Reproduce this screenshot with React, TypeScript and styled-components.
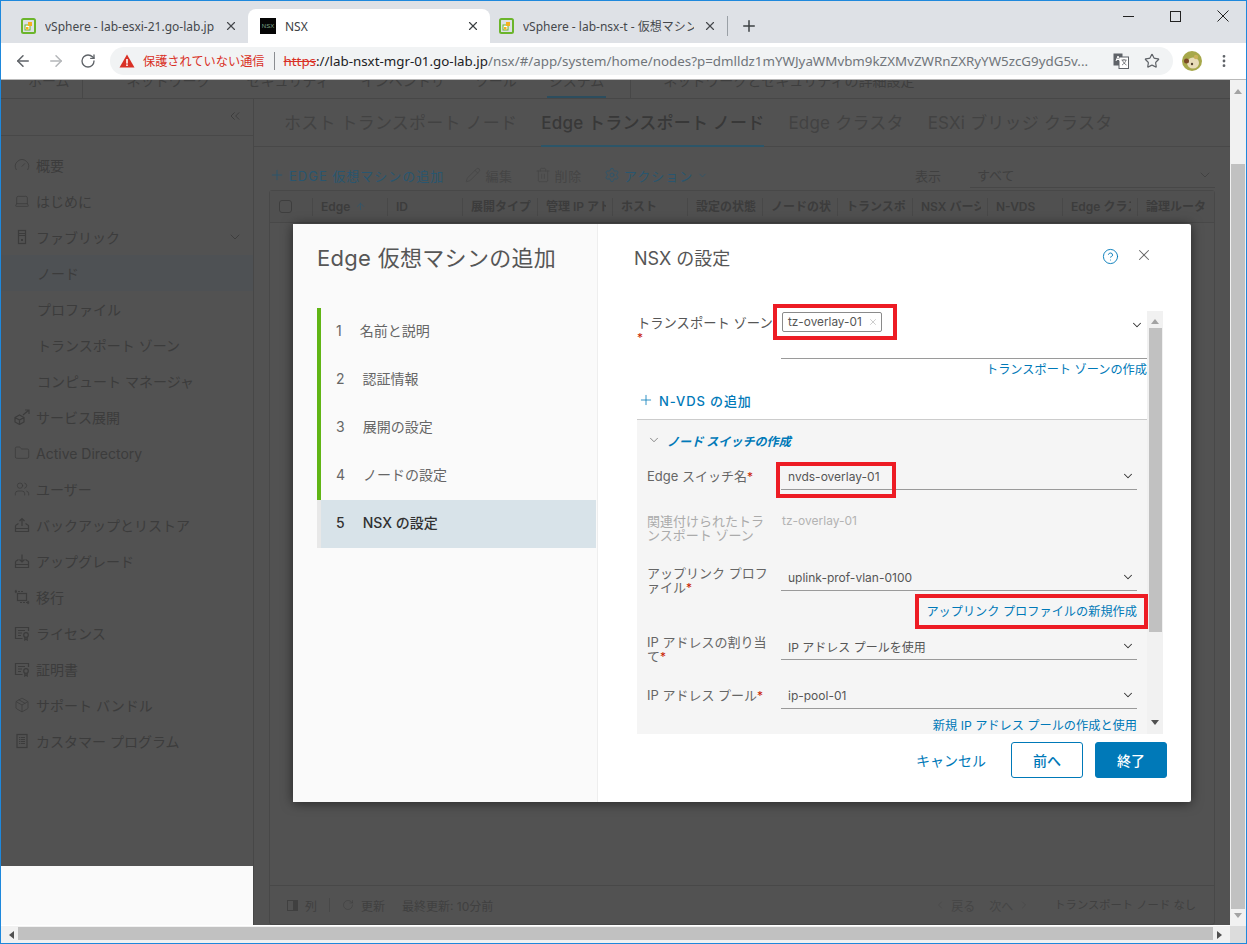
import styled, { createGlobalStyle } from 'styled-components';
import { ReactNode } from 'react';
import {
  ArrowLeft,
  ArrowRight,
  ArrowUp,
  ChevronDown,
  ChevronLeft,
  ChevronRight,
  ChevronsLeft,
  CircleHelp,
  Folder,
  Gauge,
  Laptop,
  MoreVertical,
  Package,
  Pencil,
  Plus,
  RotateCw,
  Settings,
  Star,
  Trash2,
  Users,
  X,
} from 'lucide-react';

const UI = `Inter, "Noto Sans CJK JP", sans-serif`;
const CHROME = `"Noto Sans", "Noto Sans CJK JP", sans-serif`;

const Global = createGlobalStyle`
  html, body { margin: 0; padding: 0; overflow: hidden; background: #fff; }
  * { box-sizing: border-box; }
`;

const Page = styled.div`
  position: relative;
  width: 1247px;
  height: 944px;
  overflow: hidden;
  display: flex;
  flex-direction: column;
  border: 1px solid #1e88dc;
  font-family: ${UI};
`;

/* browser chrome */
const TabStrip = styled.div`
  height: 42px;
  background: #dee1e6;
  display: flex;
  align-items: flex-end;
  padding-left: 7px;
  flex-shrink: 0;
`;

const Tab = styled.div<{ $active?: boolean; $width: number; $pad: number }>`
  width: ${({ $width }) => $width}px;
  height: 34px;
  display: flex;
  align-items: center;
  gap: 9px;
  padding: 0 10px 0 ${({ $pad }) => $pad}px;
  background: ${({ $active }) => ($active ? '#fff' : 'transparent')};
  border-radius: 8px 8px 0 0;
  font: 12px ${CHROME};
  color: ${({ $active }) => ($active ? '#3c4043' : '#45484c')};
`;

const TabTitle = styled.span`
  flex: 1;
  min-width: 0;
  white-space: nowrap;
  overflow: hidden;
`;

const NsxFavicon = styled.span`
  width: 16px;
  height: 16px;
  background: #050505;
  color: #7fa98f;
  font: 6px/16px "Liberation Sans", sans-serif;
  text-align: center;
  flex-shrink: 0;
`;

const TabSeparator = styled.div`
  width: 1px;
  height: 20px;
  background: #9aa0a6;
  margin: 0 12px 7px 0;
`;

const NewTab = styled.div`
  height: 34px;
  display: flex;
  align-items: center;
  color: #3c4043;
`;

const WindowButtons = styled.div`
  margin-left: auto;
  align-self: flex-start;
  display: flex;
  height: 30px;
  align-items: center;
  color: #222;
`;

const WindowButton = styled.div`
  width: 47px;
  display: flex;
  justify-content: center;
  align-items: center;
`;

const ToolBar = styled.div`
  height: 37px;
  background: #fff;
  border-bottom: 1px solid #b9b9b9;
  display: flex;
  align-items: center;
  padding-left: 13px;
  flex-shrink: 0;
`;

const NavButton = styled.div<{ $muted?: boolean }>`
  width: 33px;
  display: flex;
  align-items: center;
  color: ${({ $muted }) => ($muted ? '#b4b6b9' : '#5f6368')};
`;

const UrlPill = styled.div`
  width: 1063px;
  height: 28px;
  margin-left: -3px;
  border-radius: 14px;
  background: #f1f3f4;
  display: flex;
  align-items: center;
  padding: 0 13px 0 9px;
  font: 13.35px ${CHROME};
  white-space: nowrap;
`;

const NotSecure = styled.span`
  color: #d93025;
  margin-left: 8px;
  font-size: 12.2px;
`;

const UrlDivider = styled.span`
  width: 1px;
  height: 18px;
  background: #8a8d91;
  margin: 0 9px;
`;

const Https = styled.span`
  color: #d93025;
  text-decoration: line-through;
`;

const UrlHost = styled.span`
  color: #202124;
`;

const UrlRest = styled.span`
  flex: 1;
  min-width: 0;
  overflow: hidden;
  color: #70757a;
`;

const PillIcons = styled.div`
  display: flex;
  align-items: center;
  gap: 15px;
  color: #5f6368;
  margin-left: 10px;
`;

const ToolEnd = styled.div`
  display: flex;
  align-items: center;
  margin-left: 9px;
  gap: 14px;
  color: #5f6368;
`;

/* page behind the dialog */
const Viewport = styled.div`
  flex: 1;
  min-height: 0;
  display: flex;
`;

const AppPane = styled.div`
  width: 1229px;
  display: flex;
  flex-direction: column;
  background: #525252;
  color: #3e3e3e;
  border-bottom: 1px solid #fff;
`;

const HeaderNav = styled.div`
  height: 19px;
  flex-shrink: 0;
  overflow: hidden;
  display: flex;
  padding-left: 27px;
  border-bottom: 1px solid #474747;
  font-size: 14px;
`;

const HeaderItem = styled.div<{ $active?: boolean; $gap: number; $side?: number }>`
  height: 26px;
  margin-top: -8px;
  margin-right: ${({ $gap }) => $gap}px;
  padding: 0 ${({ $side }) => $side ?? 0}px;
  line-height: 18px;
  white-space: nowrap;
  border-bottom: 2px solid ${({ $active }) => ($active ? '#2c4d5e' : 'transparent')};
`;

const Divider = styled.div<{ $gap: number }>`
  width: 1px;
  height: 18px;
  background: #474747;
  margin-right: ${({ $gap }) => $gap}px;
`;

const Body = styled.div`
  flex: 1;
  min-height: 0;
  display: flex;
`;

const SideColumn = styled.div`
  width: 253px;
  display: flex;
  flex-direction: column;
  border-right: 1px solid #474747;
  flex-shrink: 0;
`;

const SideNav = styled.div`
  height: 767px;
  background: #525252;
`;

const SideBlank = styled.div`
  flex: 1;
  background: #fafafa;
`;

const Collapse = styled.div`
  height: 37px;
  border-bottom: 1px solid #484848;
  display: flex;
  justify-content: flex-end;
  align-items: center;
  padding: 0 10px 2px 0;
  color: #383838;
  margin-bottom: 11px;
`;

const SideRow = styled.div<{ $selected?: boolean; $child?: boolean }>`
  height: 36px;
  display: flex;
  align-items: center;
  gap: 6px;
  padding-left: ${({ $child }) => ($child ? 36 : 13)}px;
  padding-right: 10px;
  font-size: 14px;
  white-space: nowrap;
  background: ${({ $selected }) => ($selected ? '#4e5154' : 'transparent')};
  color: #3c3c3c;
`;

const SideLabel = styled.span`
  flex: 1;
`;

const IconBox = styled.svg`
  width: 16px;
  height: 16px;
  flex-shrink: 0;
  fill: none;
  stroke: currentColor;
  stroke-width: 1.2;
`;

const Main = styled.div`
  flex: 1;
  min-width: 0;
  display: flex;
  flex-direction: column;
  padding: 0 15px 0 15px;
`;

const MainTabs = styled.div`
  height: 48px;
  margin: 0 -15px;
  padding-left: 30px;
  display: flex;
  gap: 24px;
  border-bottom: 1px solid #484848;
  font-size: 17px;
  flex-shrink: 0;
`;

const MainTab = styled.div<{ $active?: boolean }>`
  height: 48px;
  line-height: 48px;
  white-space: nowrap;
  letter-spacing: 0.2px;
  font-weight: ${({ $active }) => ($active ? 500 : 400)};
  color: ${({ $active }) => ($active ? '#383838' : '#424242')};
  border-bottom: 2px solid ${({ $active }) => ($active ? '#2c5568' : 'transparent')};
`;

const Actions = styled.div`
  height: 27px;
  margin-top: 16px;
  padding-bottom: 3px;
  display: flex;
  align-items: center;
  font-size: 13px;
  flex-shrink: 0;
  white-space: nowrap;
`;

const Action = styled.div<{ $blue?: boolean; $gap: number }>`
  display: flex;
  align-items: center;
  gap: 4px;
  margin-right: ${({ $gap }) => $gap}px;
  color: ${({ $blue }) => ($blue ? '#29566f' : '#454545')};
  letter-spacing: ${({ $blue }) => ($blue ? 1 : 0.6)}px;
`;

const ShowLabel = styled.span`
  margin-left: auto;
  color: #404040;
`;

const ShowSelect = styled.div`
  width: 245px;
  height: 25px;
  margin-left: 29px;
  border-bottom: 1px solid #474747;
  display: flex;
  align-items: center;
  justify-content: space-between;
  padding: 0 2px 0 7px;
  color: #404040;
`;

const Card = styled.div`
  flex: 1;
  min-height: 0;
  display: flex;
  flex-direction: column;
  border: 1px solid #484848;
  border-radius: 3px;
`;

const TableHead = styled.div`
  height: 32px;
  display: flex;
  align-items: center;
  border-bottom: 1px solid #484848;
  background: #505050;
  font-size: 12px;
  font-weight: 600;
  color: #3c3c3c;
`;

const CheckCell = styled.div`
  width: 42px;
  padding-left: 9px;
  flex-shrink: 0;
`;

const FakeCheck = styled.div`
  width: 13px;
  height: 13px;
  border: 1px solid #3e3e3e;
  border-radius: 3px;
`;

const HeadCell = styled.div`
  width: 69px;
  margin-right: 6px;
  flex-shrink: 0;
  overflow: hidden;
  white-space: nowrap;
  display: flex;
  align-items: center;
  gap: 5px;
  padding-left: 8px;
  border-left: 1px solid #484848;
  line-height: 18px;
`;

const SortArrow = styled.span`
  color: #29566f;
  display: flex;
`;

const TableBody = styled.div`
  flex: 1;
`;

const CardFooter = styled.div`
  height: 39px;
  border-top: 1px solid #484848;
  display: flex;
  align-items: center;
  padding: 0 18px 0 17px;
  font-size: 12px;
  color: #404040;
  white-space: nowrap;
`;

const FooterItem = styled.span<{ $gap: number }>`
  display: flex;
  align-items: center;
  gap: 7px;
  margin-right: ${({ $gap }) => $gap}px;
`;

const FooterSep = styled.span`
  width: 1px;
  height: 14px;
  background: #484848;
  margin-right: 12px;
`;

const Pager = styled.span`
  margin-left: auto;
  display: flex;
  align-items: center;
  gap: 5px;
  color: #454545;
  margin-right: 24px;
`;

const PagerGap = styled.span`
  width: 4px;
`;

const NoNodes = styled.span`
  font-size: 11.3px;
  margin-top: -3px;
`;

const VBar = styled.div`
  width: 16px;
  background: #f1f1f1;
  display: flex;
  flex-direction: column;
  align-items: center;
`;

const ArrowGlyph = styled.div<{ $dir: 'up' | 'down' | 'left' | 'right'; $dark?: boolean }>`
  width: 0;
  height: 0;
  border: 4px solid transparent;
  ${({ $dir, $dark }) => {
    const side = { up: 'bottom', down: 'top', left: 'right', right: 'left' }[$dir];
    return `border-${side}: 5px solid ${$dark ? '#505050' : '#a3a3a3'};`;
  }}
`;

const VBarEnd = styled.div<{ $h: number; $pad: number }>`
  height: ${({ $h }) => $h}px;
  width: 100%;
  padding-top: ${({ $pad }) => $pad}px;
  display: flex;
  justify-content: center;
  align-items: flex-start;
  flex-shrink: 0;
`;

const VThumb = styled.div`
  flex: 1;
  width: 14px;
  background: #c1c1c1;
`;

const HBar = styled.div`
  height: 17px;
  flex-shrink: 0;
  display: flex;
  background: #f1f1f1;
`;

const HEnd = styled.div`
  width: 17px;
  display: flex;
  align-items: center;
  justify-content: center;
`;

const HThumb = styled.div`
  width: 1195px;
  height: 13px;
  margin-top: 1px;
  background: #c1c1c1;
`;

const Corner = styled.div`
  margin-left: auto;
  width: 16px;
  background: #dcdcdc;
`;

/* dialog */
const Modal = styled.div`
  position: absolute;
  left: 292px;
  top: 223px;
  width: 898px;
  height: 578px;
  display: flex;
  background: #fff;
  border-radius: 2px;
  box-shadow: 0 1px 12px rgba(0, 0, 0, 0.55);
`;

const ModalLeft = styled.div`
  width: 305px;
  flex-shrink: 0;
  background: #fafafa;
  border-right: 1px solid #eee;
  padding-left: 24px;
`;

const ModalTitle = styled.div`
  height: 84px;
  padding-top: 20px;
  font-size: 22px;
  line-height: 28px;
  letter-spacing: 0.3px;
  color: #565656;
  white-space: nowrap;
`;

const StepList = styled.div`
  margin-right: 1px;
`;

const Step = styled.div<{ $current?: boolean }>`
  height: 48px;
  padding-bottom: 4px;
  display: flex;
  align-items: center;
  border-left: 4px solid ${({ $current }) => ($current ? '#e8e8e8' : '#60b515')};
  background: ${({ $current }) => ($current ? '#d8e3e9' : 'transparent')};
  color: ${({ $current }) => ($current ? '#313131' : '#666')};
  font-size: 14px;
  font-weight: ${({ $current }) => ($current ? 500 : 400)};
`;

const StepNumber = styled.span`
  margin: 0 18px 0 15px;
`;

const ModalRight = styled.div`
  flex: 1;
  min-width: 0;
  display: flex;
  flex-direction: column;
  padding-left: 39px;
`;

const RightHead = styled.div`
  height: 79px;
  margin-left: -3px;
  padding: 21px 38px 0 0;
  display: flex;
  align-items: flex-start;
  color: #565656;
`;

const RightTitle = styled.div`
  flex: 1;
  font-size: 18px;
  line-height: 28px;
`;

const HelpIcon = styled.span`
  color: #0079b8;
  display: flex;
  margin: 3px 16px 0 0;
`;

const CloseIcon = styled.span`
  color: #666;
  display: flex;
  margin-top: 1px;
`;

const FormScroll = styled.div`
  width: 526px;
  height: 431px;
  padding-top: 8px;
  overflow: hidden;
  display: flex;
  flex-shrink: 0;
`;

const FormContent = styled.div`
  width: 510px;
  display: flex;
  flex-direction: column;
`;

const ZoneRow = styled.div`
  height: 48px;
  display: flex;
  flex-shrink: 0;
`;

const ZoneLabel = styled.div`
  width: 144px;
  padding-top: 5px;
  font-size: 13.3px;
  line-height: 14px;
  color: #565656;
  white-space: nowrap;
`;

const Required = styled.span`
  color: #c92100;
  font-size: 12px;
`;

const ZoneInput = styled.div`
  flex: 1;
  border-bottom: 1px solid #9a9a9a;
  display: flex;
  align-items: flex-start;
  justify-content: space-between;
  padding: 1px 3px 0 1px;
  color: #333;
`;

const Highlight = styled.div<{ $x: number; $y: number; $w: number; $h: number }>`
  position: absolute;
  left: ${({ $x }) => $x}px;
  top: ${({ $y }) => $y}px;
  width: ${({ $w }) => $w}px;
  height: ${({ $h }) => $h}px;
  border: 4px solid #ed1c24;
  pointer-events: none;
`;

const ChipWrap = styled.div`
  position: relative;
`;

const Chip = styled.div`
  width: 100px;
  height: 20px;
  border: 1px solid #8a8a8a;
  border-radius: 2px;
  display: flex;
  align-items: center;
  justify-content: space-between;
  padding: 0 3px 0 5px;
  font-size: 11.8px;
  color: #565656;
  white-space: nowrap;
`;

const ChipClose = styled.span`
  display: flex;
  color: #9a9a9a;
`;

const LinkLine = styled.div<{ $gapTop?: number }>`
  position: relative;
  height: 20px;
  line-height: 20px;
  margin-top: ${({ $gapTop }) => $gapTop ?? 0}px;
  text-align: right;
  font-size: 12.2px;
  color: #0079b8;
  white-space: nowrap;
  flex-shrink: 0;
`;

const AddSwitch = styled.div`
  height: 20px;
  margin: 10px 0 9px 1px;
  display: flex;
  align-items: center;
  gap: 5px;
  color: #0079b8;
  font-size: 13px;
  font-weight: 500;
  letter-spacing: 0.9px;
  flex-shrink: 0;
`;

const SwitchPanel = styled.div`
  flex: 1;
  background: #f5f5f5;
  border-top: 1px solid #ccc;
  padding: 10px 10px 0;
`;

const PanelHead = styled.div`
  height: 20px;
  display: flex;
  align-items: center;
  gap: 6px;
  color: #666;
`;

const PanelTitle = styled.span`
  color: #0079b8;
  font-size: 12.1px;
  font-weight: 700;
  font-style: italic;
`;

const Field = styled.div<{ $top: number }>`
  display: flex;
  margin-top: ${({ $top }) => $top}px;
  height: 28px;
`;

const FieldLabel = styled.div<{ $dim?: boolean; $single?: boolean }>`
  width: 134px;
  flex-shrink: 0;
  padding: ${({ $single }) => ($single ? '0 6px 0 0' : '3px 6px 0 0')};
  font-size: 13px;
  line-height: ${({ $single }) => ($single ? '28px' : '14px')};
  color: ${({ $dim }) => ($dim ? '#ababab' : '#666')};
`;

const Select = styled.div`
  position: relative;
  flex: 1;
  height: 28px;
  border-bottom: 1px solid #9a9a9a;
  display: flex;
  align-items: center;
  justify-content: space-between;
  padding: 1px 2px 0 7px;
  font-size: 12px;
  color: #565656;
  white-space: nowrap;
`;

const Chevron = styled.span<{ $zone?: boolean }>`
  display: flex;
  color: #333;
  margin-top: ${({ $zone }) => ($zone ? 6 : 0)}px;
`;

const StaticValue = styled.div`
  line-height: 14px;
  padding: 3px 0 0 1px;
  font-size: 12px;
  color: #b3b3b3;
`;

const FormBar = styled.div`
  width: 16px;
  background: #f1f1f1;
  display: flex;
  flex-direction: column;
  align-items: center;
`;

const FormThumb = styled.div`
  width: 13px;
  height: 304px;
  background: #c1c1c1;
  flex-shrink: 0;
`;

const FormBarBottom = styled.div`
  flex: 1;
  display: flex;
  align-items: flex-end;
  padding-bottom: 5px;
`;

const ModalFooter = styled.div`
  height: 36px;
  margin-top: 8px;
  width: 530px;
  display: flex;
  align-items: center;
  justify-content: flex-end;
  gap: 12px;
`;

const CancelLink = styled.span`
  color: #0079b8;
  font-size: 14px;
  margin-right: 13px;
`;

const Button = styled.button<{ $primary?: boolean }>`
  width: 72px;
  height: 36px;
  border-radius: 3px;
  border: 1px solid #0079b8;
  background: ${({ $primary }) => ($primary ? '#0079b8' : '#fff')};
  color: ${({ $primary }) => ($primary ? '#fff' : '#0079b8')};
  font: 500 14px ${UI};
  padding: 0;
`;

function Ico({ children }: { children: ReactNode }) {
  return <IconBox viewBox="0 0 16 16">{children}</IconBox>;
}

function VSphereFavicon() {
  return (
    <svg width="15" height="16" viewBox="0 0 15 16" style={{ flexShrink: 0 }}>
      <rect x="1" y="1" width="13" height="14" rx="1.5" fill="none" stroke="#6bb52b" strokeWidth="2" />
      <rect x="4" y="7" width="5" height="5" fill="#fff" stroke="#6bb52b" />
      <rect x="7" y="4" width="4" height="4" fill="#f6b01e" />
      <rect x="5" y="9" width="2.5" height="2.5" fill="#f6b01e" />
    </svg>
  );
}

function WarningIcon() {
  return (
    <svg width="16" height="14" viewBox="0 0 16 14" style={{ flexShrink: 0 }}>
      <path d="M8 0.5 15.5 13.5H0.5Z" fill="#d93025" />
      <rect x="7.2" y="5" width="1.6" height="4.6" fill="#fff" />
      <rect x="7.2" y="10.4" width="1.6" height="1.6" fill="#fff" />
    </svg>
  );
}

function TranslateIcon() {
  return (
    <svg width="16" height="16" viewBox="0 0 16 16">
      <rect x="0.5" y="0.5" width="9" height="12" fill="#5f6368" />
      <rect x="6" y="4" width="9.5" height="11.5" fill="#fff" stroke="#5f6368" />
      <path d="M3 8l2-5 2 5M3.6 6.5h2.8" stroke="#fff" fill="none" />
      <path d="M8.5 7h5M11 6v1M9.5 7c.5 2 2 4 4 5M13 7c-.5 2-2 4-4 5" stroke="#5f6368" fill="none" strokeWidth="0.8" />
    </svg>
  );
}

function Avatar() {
  return (
    <svg width="20" height="20" viewBox="0 0 20 20">
      <circle cx="10" cy="10" r="10" fill="#a7a84a" />
      <ellipse cx="11" cy="12" rx="6" ry="5.5" fill="#e8dcb8" />
      <circle cx="4.500" cy="10" r="2.500" fill="#7b4a26" />
      <circle cx="14" cy="6" r="2.200" fill="#c9b35a" />
      <circle cx="10" cy="13" r="1.200" fill="#50402c" />
    </svg>
  );
}

const fabricIcon = (
  <Ico>
    <rect x="4.5" y="1.5" width="7" height="13" />
    <path d="M4.5 4.5h7M4.5 6.5h7" />
    <rect x="7" y="10" width="2" height="2" fill="currentColor" stroke="none" />
  </Ico>
);

const serviceIcon = (
  <Ico>
    <path d="M1 8.500 5.500 6 10 8.500V13l-4.500 2.500L1 13ZM1 8.500l4.500 2.500 4.500-2.500M5.500 11v4.500" />
    <path d="M9 6l6-5M11 1h4v4" />
  </Ico>
);

const backupIcon = (
  <Ico>
    <path d="M1.500 8.500v6h13v-6l-3-2M1.500 8.500l3-2M1.500 11.500h13" />
    <path d="M8 9V1.500M5.500 4 8 1.500 10.500 4" />
  </Ico>
);

const upgradeIcon = (
  <Ico>
    <path d="M1.500 8.500v6h13v-6l-3-2M1.500 8.500l3-2M1.500 11.500h13" />
    <path d="M8 1.500V9M5.500 6.500 8 9l2.500-2.500" />
  </Ico>
);

const migrateIcon = (
  <Ico>
    <rect x="3.500" y="4.500" width="9" height="7" />
    <path d="M1 2.500h9M1 2.500l1.500-1.500M1 2.500 2.500 4M6 13.500h9M15 13.500l-1.500-1.500M15 13.500 13.500 15" strokeDasharray="2 1" />
  </Ico>
);

const licenseIcon = (
  <Ico>
    <path d="M14.500 6V2.500h-13v11h7M4 5.500h7M4 8h4M4 10.500h3" />
    <circle cx="12" cy="10" r="2.300" />
    <path d="M10.800 12v3l1.200-1 1.200 1v-3" />
  </Ico>
);

const programIcon = (
  <Ico>
    <rect x="3" y="1.500" width="10" height="13" />
    <path d="M5 4.500h6M5 6.500h6M5 8.500h6M5 10.500h6" strokeDasharray="1 .6 4.400 0" />
  </Ico>
);

const sideItems: { label: string; icon?: ReactNode; child?: boolean; selected?: boolean; open?: boolean }[] = [
  { label: '概要', icon: <Gauge size={16} strokeWidth={1.2} /> },
  { label: 'はじめに', icon: <Laptop size={16} strokeWidth={1.2} /> },
  { label: 'ファブリック', icon: fabricIcon, open: true },
  { label: 'ノード', child: true, selected: true },
  { label: 'プロファイル', child: true },
  { label: 'トランスポート ゾーン', child: true },
  { label: 'コンピュート マネージャ', child: true },
  { label: 'サービス展開', icon: serviceIcon },
  { label: 'Active Directory', icon: <Folder size={16} strokeWidth={1.2} /> },
  { label: 'ユーザー', icon: <Users size={16} strokeWidth={1.2} /> },
  { label: 'バックアップとリストア', icon: backupIcon },
  { label: 'アップグレード', icon: upgradeIcon },
  { label: '移行', icon: migrateIcon },
  { label: 'ライセンス', icon: licenseIcon },
  { label: '証明書', icon: licenseIcon },
  { label: 'サポート バンドル', icon: <Package size={16} strokeWidth={1.2} /> },
  { label: 'カスタマー プログラム', icon: programIcon },
];

const columns = ['展開タイプ', '管理 IP アドレス', 'ホスト', '設定の状態', 'ノードの状態', 'トランスポート ノード', 'NSX バージョン', 'N-VDS', 'Edge クラスタ', '論理ルーター'];

const steps = ['名前と説明', '認証情報', '展開の設定', 'ノードの設定', 'NSX の設定'];

const selectChevron = (
  <Chevron>
    <ChevronDown size={14} strokeWidth={1.8} />
  </Chevron>
);

export default function App() {
  return (
    <>
      <Global />
      <Page>
        <TabStrip>
          <Tab $width={240} $pad={13}>
            <VSphereFavicon />
            <TabTitle>vSphere - lab-esxi-21.go-lab.jp - </TabTitle>
            <X size={14} strokeWidth={2} />
          </Tab>
          <Tab $active $width={242} $pad={12}>
            <NsxFavicon>NSX</NsxFavicon>
            <TabTitle>NSX</TabTitle>
            <X size={14} strokeWidth={2} />
          </Tab>
          <Tab $width={237} $pad={9}>
            <VSphereFavicon />
            <TabTitle>vSphere - lab-nsx-t - 仮想マシン</TabTitle>
            <X size={14} strokeWidth={2} />
          </Tab>
          <TabSeparator />
          <NewTab>
            <Plus size={18} strokeWidth={2} />
          </NewTab>
          <WindowButtons>
            <WindowButton>
              <svg width="11" height="11"><path d="M0 5.500h11" stroke="#222" /></svg>
            </WindowButton>
            <WindowButton>
              <svg width="11" height="11"><rect x=".5" y=".5" width="10" height="10" fill="none" stroke="#222" /></svg>
            </WindowButton>
            <WindowButton>
              <svg width="12" height="12"><path d="M.5.500l11 11M11.500.500l-11 11" stroke="#222" /></svg>
            </WindowButton>
          </WindowButtons>
        </TabStrip>
        <ToolBar>
          <NavButton><ArrowLeft size={18} strokeWidth={2} /></NavButton>
          <NavButton $muted><ArrowRight size={18} strokeWidth={2} /></NavButton>
          <NavButton><RotateCw size={16} strokeWidth={2} /></NavButton>
          <UrlPill>
            <WarningIcon />
            <NotSecure>保護されていない通信</NotSecure>
            <UrlDivider />
            <Https>https</Https>
            <UrlHost>://lab-nsxt-mgr-01.go-lab.jp</UrlHost>
            <UrlRest>/nsx/#/app/system/home/nodes?p=dmlldz1mYWJyaWMvbm9kZXMvZWRnZXRyYW5zcG9ydG5v...</UrlRest>
            <PillIcons>
              <TranslateIcon />
              <Star size={16} strokeWidth={1.8} />
            </PillIcons>
          </UrlPill>
          <ToolEnd>
            <Avatar />
            <MoreVertical size={16} strokeWidth={2.2} />
          </ToolEnd>
        </ToolBar>
        <Viewport>
          <AppPane>
            <HeaderNav>
              <HeaderItem $gap={12}>ホーム</HeaderItem>
              <Divider $gap={44} />
              <HeaderItem $gap={36}>ネットワーク</HeaderItem>
              <HeaderItem $gap={31}>セキュリティ</HeaderItem>
              <HeaderItem $gap={30}>インベントリ</HeaderItem>
              <HeaderItem $gap={30}>ツール</HeaderItem>
              <HeaderItem $active $gap={24} $side={2}>システム</HeaderItem>
              <Divider $gap={32} />
              <HeaderItem $gap={0}>ネットワークとセキュリティの詳細設定</HeaderItem>
            </HeaderNav>
            <Body>
              <SideColumn>
                <SideNav>
                  <Collapse><ChevronsLeft size={16} strokeWidth={1.2} /></Collapse>
                  {sideItems.map((item) => (
                    <SideRow key={item.label} $child={item.child} $selected={item.selected}>
                      {item.icon}
                      <SideLabel>{item.label}</SideLabel>
                      {item.open && <ChevronDown size={16} strokeWidth={1.4} />}
                    </SideRow>
                  ))}
                </SideNav>
                <SideBlank />
              </SideColumn>
              <Main>
                <MainTabs>
                  <MainTab>ホスト トランスポート ノード</MainTab>
                  <MainTab $active>Edge トランスポート ノード</MainTab>
                  <MainTab>Edge クラスタ</MainTab>
                  <MainTab>ESXi ブリッジ クラスタ</MainTab>
                </MainTabs>
                <Actions>
                  <Action $blue $gap={21}>
                    <Plus size={16} strokeWidth={1.3} />
                    EDGE 仮想マシンの追加
                  </Action>
                  <Action $gap={22}>
                    <Pencil size={16} strokeWidth={1.1} />
                    編集
                  </Action>
                  <Action $gap={22}>
                    <Trash2 size={16} strokeWidth={1.1} />
                    削除
                  </Action>
                  <Action $blue $gap={0}>
                    <Settings size={16} strokeWidth={1.2} />
                    アクション
                    <ChevronDown size={11} strokeWidth={1.5} />
                  </Action>
                  <ShowLabel>表示</ShowLabel>
                  <ShowSelect>
                    すべて
                    <ChevronDown size={16} strokeWidth={1.3} />
                  </ShowSelect>
                </Actions>
                <Card>
                  <TableHead>
                    <CheckCell><FakeCheck /></CheckCell>
                    <HeadCell>
                      Edge
                      <SortArrow><ArrowUp size={11} strokeWidth={1.4} /></SortArrow>
                    </HeadCell>
                    <HeadCell>ID</HeadCell>
                    {columns.map((c) => (
                      <HeadCell key={c}>{c}</HeadCell>
                    ))}
                  </TableHead>
                  <TableBody />
                  <CardFooter>
                    <FooterItem $gap={12}>
                      <svg width="11" height="11" viewBox="0 0 11 11">
                        <rect x=".5" y=".5" width="10" height="10" fill="none" stroke="#404040" />
                        <rect x="6" y="1" width="4" height="9" fill="#404040" />
                      </svg>
                      列
                    </FooterItem>
                    <FooterSep />
                    <FooterItem $gap={17}>
                      <RotateCw size={12} strokeWidth={1.2} />
                      更新
                    </FooterItem>
                    <FooterItem $gap={0}>最終更新: 10分前</FooterItem>
                    <Pager>
                      <ChevronLeft size={12} strokeWidth={1.3} />
                      戻る
                      <PagerGap />
                      次へ
                      <ChevronRight size={12} strokeWidth={1.3} />
                    </Pager>
                    <NoNodes>トランスポート ノード なし</NoNodes>
                  </CardFooter>
                </Card>
              </Main>
            </Body>
          </AppPane>
          <VBar>
            <VBarEnd $h={84} $pad={5}><ArrowGlyph $dir="up" /></VBarEnd>
            <VThumb />
            <VBarEnd $h={17} $pad={4}><ArrowGlyph $dir="down" /></VBarEnd>
          </VBar>
        </Viewport>
        <HBar>
          <HEnd><ArrowGlyph $dir="left" $dark /></HEnd>
          <HThumb />
          <HEnd><ArrowGlyph $dir="right" $dark /></HEnd>
          <Corner />
        </HBar>

        <Modal>
          <ModalLeft>
            <ModalTitle>Edge 仮想マシンの追加</ModalTitle>
            <StepList>
              {steps.map((s, i) => (
                <Step key={s} $current={i === 4}>
                  <StepNumber>{i + 1}</StepNumber>
                  {s}
                </Step>
              ))}
            </StepList>
          </ModalLeft>
          <ModalRight>
            <RightHead>
              <RightTitle>NSX の設定</RightTitle>
              <HelpIcon><CircleHelp size={17} strokeWidth={1.3} /></HelpIcon>
              <CloseIcon><X size={18} strokeWidth={1.4} /></CloseIcon>
            </RightHead>
            <FormScroll>
              <FormContent>
                <ZoneRow>
                  <ZoneLabel>
                    トランスポート ゾーン
                    <br />
                    <Required>*</Required>
                  </ZoneLabel>
                  <ZoneInput>
                    <ChipWrap>
                      <Chip>
                        tz-overlay-01
                        <ChipClose><X size={10} strokeWidth={1.2} /></ChipClose>
                      </Chip>
                      <Highlight $x={-9} $y={-8} $w={124} $h={36} />
                    </ChipWrap>
                    <Chevron $zone><ChevronDown size={14} strokeWidth={1.8} /></Chevron>
                  </ZoneInput>
                </ZoneRow>
                <LinkLine $gapTop={1}>トランスポート ゾーンの作成</LinkLine>
                <AddSwitch>
                  <Plus size={16} strokeWidth={1.2} />
                  N-VDS の追加
                </AddSwitch>
                <SwitchPanel>
                  <PanelHead>
                    <ChevronDown size={14} strokeWidth={1.3} />
                    <PanelTitle>ノード スイッチの作成</PanelTitle>
                  </PanelHead>
                  <Field $top={12}>
                    <FieldLabel $single>Edge スイッチ名<Required>*</Required></FieldLabel>
                    <Select>
                      nvds-overlay-01
                      {selectChevron}
                      <Highlight $x={-5} $y={0} $w={120} $h={36} />
                    </Select>
                  </Field>
                  <Field $top={21}>
                    <FieldLabel $dim>関連付けられたトランスポート ゾーン</FieldLabel>
                    <StaticValue>tz-overlay-01</StaticValue>
                  </Field>
                  <Field $top={24}>
                    <FieldLabel>アップリンク プロファイル<Required>*</Required></FieldLabel>
                    <Select>
                      uplink-prof-vlan-0100
                      {selectChevron}
                    </Select>
                  </Field>
                  <LinkLine $gapTop={11}>
                    アップリンク プロファイルの新規作成
                    <Highlight $x={268} $y={-8} $w={233} $h={35} />
                  </LinkLine>
                  <Field $top={10}>
                    <FieldLabel>IP アドレスの割り当て<Required>*</Required></FieldLabel>
                    <Select>
                      IP アドレス プールを使用
                      {selectChevron}
                    </Select>
                  </Field>
                  <Field $top={21}>
                    <FieldLabel $single>IP アドレス プール<Required>*</Required></FieldLabel>
                    <Select>
                      ip-pool-01
                      {selectChevron}
                    </Select>
                  </Field>
                  <LinkLine $gapTop={7}>新規 IP アドレス プールの作成と使用</LinkLine>
                </SwitchPanel>
              </FormContent>
              <FormBar>
                <VBarEnd $h={17} $pad={4}><ArrowGlyph $dir="up" /></VBarEnd>
                <FormThumb />
                <FormBarBottom><ArrowGlyph $dir="down" $dark /></FormBarBottom>
              </FormBar>
            </FormScroll>
            <ModalFooter>
              <CancelLink>キャンセル</CancelLink>
              <Button>前へ</Button>
              <Button $primary>終了</Button>
            </ModalFooter>
          </ModalRight>
        </Modal>
      </Page>
    </>
  );
}
